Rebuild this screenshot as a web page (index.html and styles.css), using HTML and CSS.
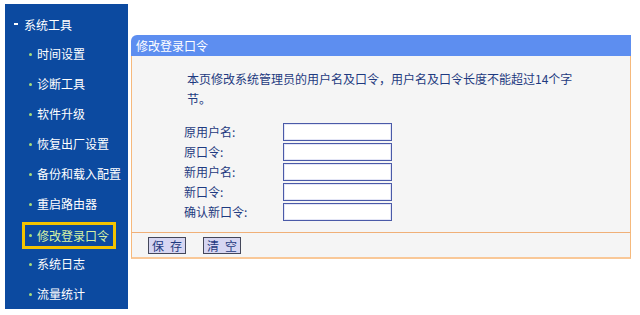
FILE: index.html
```html
<!DOCTYPE html>
<html lang="zh-CN">
<head>
<meta charset="utf-8">
<title>修改登录口令</title>
<link rel="stylesheet" href="styles.css">
</head>
<body>
<div class="page">
  <nav class="sidebar">
    <div class="group"><span class="dash"></span><span>系统工具</span></div>
    <ul class="menu">
      <li class="item"><span class="dot"></span>时间设置</li>
      <li class="item"><span class="dot"></span>诊断工具</li>
      <li class="item"><span class="dot"></span>软件升级</li>
      <li class="item"><span class="dot"></span>恢复出厂设置</li>
      <li class="item"><span class="dot"></span>备份和载入配置</li>
      <li class="item"><span class="dot"></span>重启路由器</li>
      <li class="item current"><span class="hl"><span class="dot"></span>修改登录口令</span></li>
      <li class="item"><span class="dot"></span>系统日志</li>
      <li class="item"><span class="dot"></span>流量统计</li>
    </ul>
  </nav>
  <main class="panel">
    <div class="panel-head">修改登录口令</div>
    <div class="panel-body">
      <p class="intro">本页修改系统管理员的用户名及口令，用户名及口令长度不能超过14个字节。</p>
      <div class="form">
        <label class="lbl">原用户名:</label><input class="field" type="text">
        <label class="lbl">原口令:</label><input class="field" type="password">
        <label class="lbl">新用户名:</label><input class="field" type="text">
        <label class="lbl">新口令:</label><input class="field" type="password">
        <label class="lbl">确认新口令:</label><input class="field" type="password">
      </div>
    </div>
    <div class="panel-foot">
      <button class="btn">保&ensp;存</button>
      <button class="btn">清&ensp;空</button>
    </div>
  </main>
</div>
</body>
</html>
```
FILE: styles.css
```css
html, body {
  margin: 0;
  padding: 0;
  background: #ffffff;
}
body {
  font-family: "Noto Sans CJK SC", "DejaVu Sans", sans-serif;
  font-size: 12px;
}
.page {
  display: flex;
  align-items: flex-start;
  padding: 4px 0 0 5px;
}
.sidebar {
  width: 123px;
  height: 305px;
  background: #0c4aa0;
  color: #ffffff;
  padding-top: 5px;
  box-sizing: border-box;
}
.group {
  height: 30px;
  display: flex;
  align-items: center;
  padding-left: 9px;
  gap: 6px;
}
.dash {
  width: 4px;
  height: 2px;
  background: #ffffff;
}
.menu {
  list-style: none;
  margin: 0;
  padding: 0;
}
.item {
  height: 30px;
  display: flex;
  align-items: center;
  padding-left: 24px;
  line-height: 16px;
}
.dot {
  width: 3px;
  height: 3px;
  border-radius: 50%;
  background: #a8e07a;
  margin-right: 5px;
  flex: none;
}
.item.current {
  padding-left: 17px;
  align-items: flex-end;
}
.hl {
  display: flex;
  align-items: center;
  height: 21px;
  border: 3px solid #f3c300;
  padding: 0 4px 0 4px;
  color: #d6f2a4;
}
.panel {
  margin-left: 3px;
  margin-top: 31px;
  width: 500px;
}
.panel-head {
  height: 21px;
  line-height: 21px;
  background: #5d8ef0;
  color: #ffffff;
  padding-left: 5px;
  border-top-left-radius: 6px;
}
.panel-body {
  background: #f5f5f5;
  border-left: 1px solid #f6b97c;
  border-right: 1px solid #f6b97c;
  padding: 13px 0 10px 55px;
  color: #1e3a80;
}
.intro {
  margin: 0 0 13px 0;
  width: 392px;
  line-height: 20px;
}
.form {
  display: grid;
  grid-template-columns: 99px 109px;
  grid-auto-rows: 20px;
  margin-left: -3px;
  align-items: center;
}
.lbl {
  line-height: 20px;
}
.field {
  box-sizing: border-box;
  width: 109px;
  height: 18px;
  margin: 0;
  padding: 0;
  border: 1px solid #4a5aa8;
  background: #ffffff;
  box-shadow: inset 0 0 0 1px #e4e6f6;
}
.panel-foot {
  background: #f5f5f5;
  border-top: 1px solid #f0b078;
  border-left: 1px solid #f6b97c;
  border-right: 1px solid #f6b97c;
  border-bottom: 2px solid #f9c898;
  height: 24px;
  display: flex;
  align-items: center;
  padding-left: 16px;
  gap: 17px;
}
.btn {
  font-family: "Noto Sans CJK SC", "DejaVu Sans", sans-serif;
  font-size: 12px;
  color: #1e3a80;
  height: 17px;
  line-height: 15px;
  padding: 0 3px;
  margin: 0;
  background: #d6d6f2;
  border: 1px solid #44475a;
}
```
